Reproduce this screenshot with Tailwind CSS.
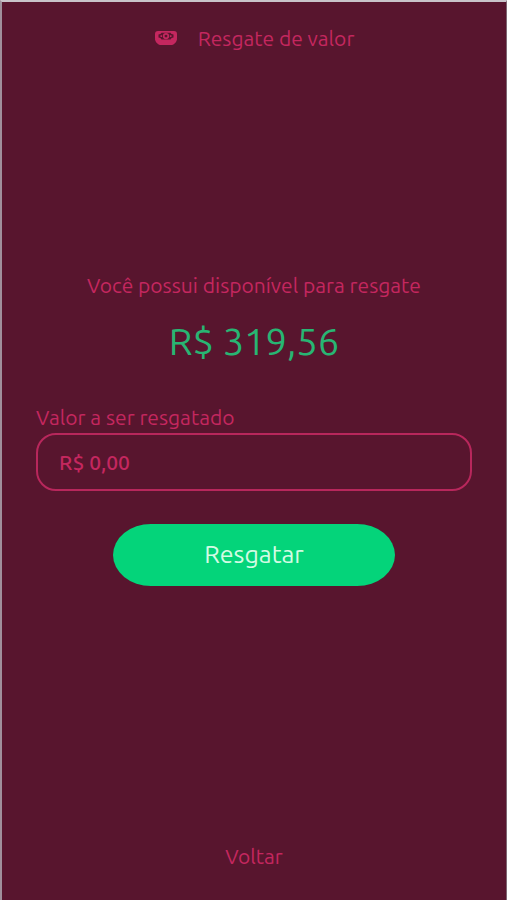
<!DOCTYPE html>
<html lang="pt-BR">
	<head>
		<meta charset="UTF-8" />
		<meta name="viewport" content="width=device-width, initial-scale=1.0" />
		<script src="https://cdn.jsdelivr.net/npm/@tailwindcss/browser@4"></script>
		<title>Resgate de valor</title>
	</head>
	<body
		class="flex min-h-screen flex-col border-t-2 border-r border-l-2 border-t-[#c9c3c9] border-r-[#7d6672] border-l-[#a08f9b] bg-[#58152e] font-['Ubuntu','Noto_Sans',sans-serif] text-[#c4275f]"
	>
		<header class="flex items-center justify-center gap-5 pt-6">
			<svg
				class="h-4 w-6"
				aria-hidden="true"
				xmlns="http://www.w3.org/2000/svg"
				viewBox="0 0 24 16"
				fill="none"
				stroke="currentColor"
			>
				<path
					fill="currentColor"
					fill-rule="evenodd"
					stroke="none"
					d="M4 1h16a3 3 0 0 1 3 3v4a3 3 0 0 1-3 3H4a3 3 0 0 1-3-3V4a3 3 0 0 1 3-3ZM7.500 2.700C7 4 5.800 4.200 4.500 4.500v3C5.800 7.800 7 8.200 7.500 9.500h9c.5-1.300 1.700-1.700 3-2v-3c-1.300-.3-2.500-.5-3-1.800Z"
				/>
				<path
					fill="currentColor"
					stroke="none"
					d="M1 8l4 2.500h14L23 8c0 2.600-.8 4.100-2.400 5.500-1.200 1.100-2.200 1.500-3.600 1.500H7c-1.400 0-2.400-.4-3.600-1.500C1.800 12.100 1 10.600 1 8Z"
				/>
				<circle cx="12" cy="6.100" r="2.300" stroke-width="1.700" />
				<path stroke-width="1.600" d="M6.500 6.100h1.600M15.900 6.100h1.600" />
			</svg>
			<h1 class="text-[21px] leading-6">Resgate de valor</h1>
		</header>

		<main class="flex flex-1 flex-col justify-center px-[34px] pb-9">
			<p class="text-center text-[21px] leading-6">
				Você possui disponível para resgate
			</p>
			<p class="mt-6 text-center text-[38px] leading-10 text-[#28b573]">
				R$ 319,56
			</p>

			<form class="mt-11 flex flex-col">
				<label for="valor" class="text-[21px] leading-6"
					>Valor a ser resgatado</label
				>
				<input
					type="text"
					id="valor"
					inputmode="decimal"
					class="mt-1 h-[58px] w-full rounded-[20px] border-2 border-[#b8275c] px-[21px] text-[21px] font-medium placeholder:text-[#c4275f] placeholder:opacity-100"
					placeholder="R$ 0,00"
				/>
				<button
					type="submit"
					class="mx-auto mt-[33px] h-[62px] w-[282px] rounded-[38px/31px] bg-[#04d47a] text-[25px] text-[#d3fbe4]"
				>
					Resgatar
				</button>
			</form>
		</main>

		<footer class="pb-8 text-center">
			<a href="#" class="block text-[21px] leading-6">Voltar</a>
		</footer>
	</body>
</html>
